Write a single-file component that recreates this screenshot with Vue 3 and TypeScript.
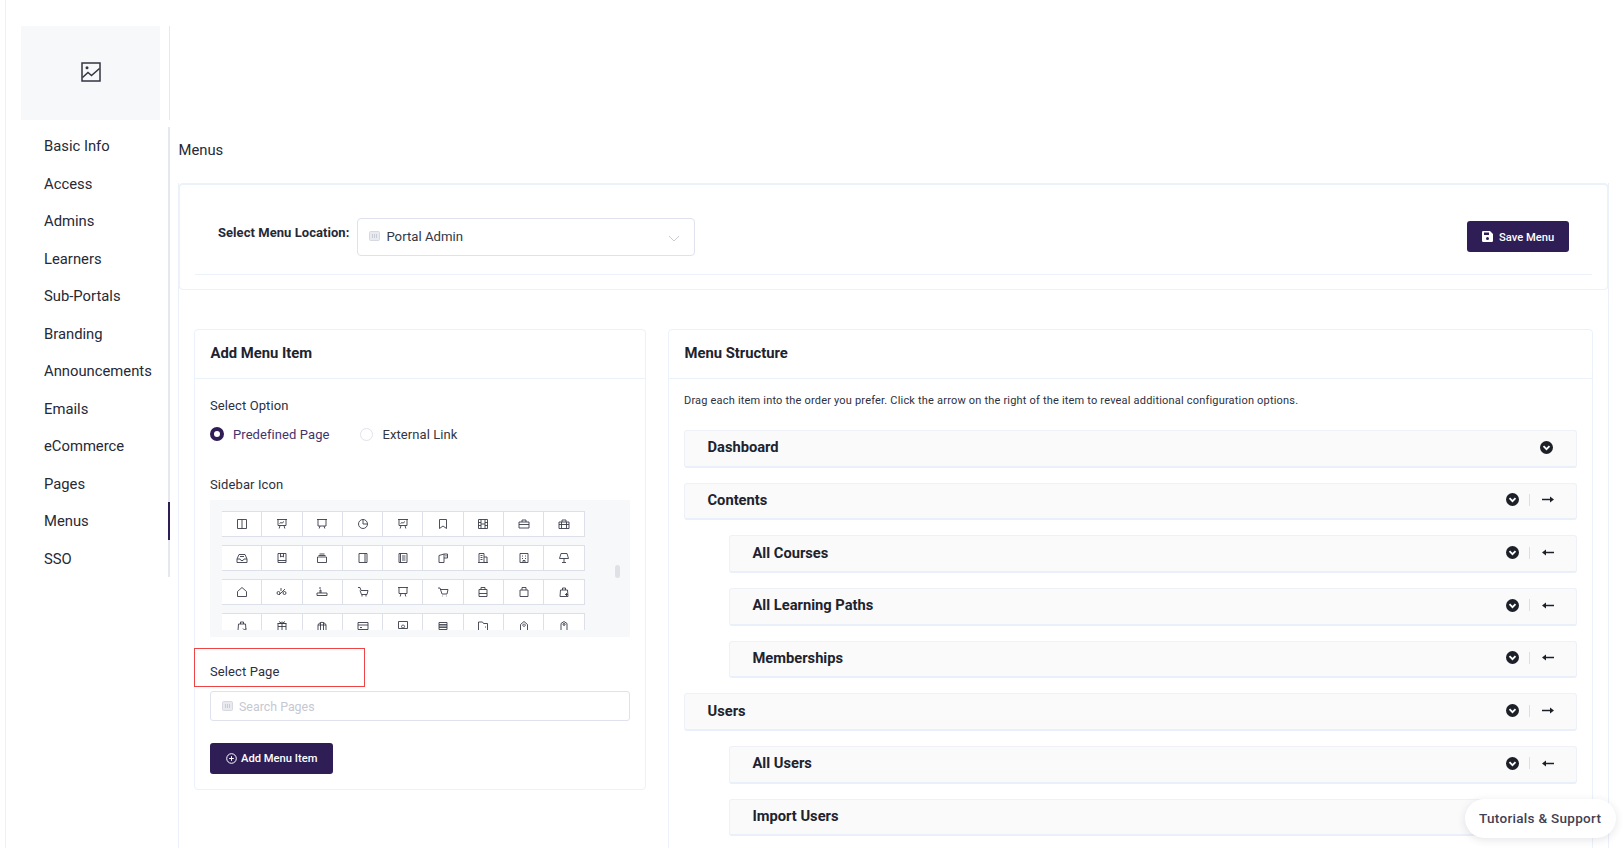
<script setup lang="ts">
interface Row { label: string; child: boolean; arrow: 'none' | 'right' | 'left' }

const navItems: string[] = ['Basic Info', 'Access', 'Admins', 'Learners', 'Sub-Portals', 'Branding', 'Announcements', 'Emails', 'eCommerce', 'Pages', 'Menus', 'SSO']

const rows: Row[] = [
  { label: 'Dashboard', child: false, arrow: 'none' },
  { label: 'Contents', child: false, arrow: 'right' },
  { label: 'All Courses', child: true, arrow: 'left' },
  { label: 'All Learning Paths', child: true, arrow: 'left' },
  { label: 'Memberships', child: true, arrow: 'left' },
  { label: 'Users', child: false, arrow: 'right' },
  { label: 'All Users', child: true, arrow: 'left' },
  { label: 'Import Users', child: true, arrow: 'left' },
]

const icons: string[] = [
  'M1.500 1.500h9v9h-9zM6 1.500v9',
  'M1 1.500h10M2 1.500v6h8v-6M3.500 5.500l1.500-1 1 .7 2-1.700M4 7.500l-.8 3M8 7.500l.8 3',
  'M1 1.500h10M2 1.500v6.500h8V1.500M4 8l-.8 2.500M8 8l.8 2.500',
  'M6 1.500a4.500 4.500 0 1 0 4.500 4.500A4.500 4.500 0 0 0 6 1.500zM6 1.500V6h4.500',
  'M1 1.500h10M2 1.500v6h8v-6M3.500 5.500l1.500-1 1 .7 2-1.700M4 7.500l-.8 3M8 7.500l.8 3',
  'M2.500 1.500h7v9L6 8l-3.500 2.500z',
  'M1.500 1.500h9v9h-9zM4 1.500v9M8 1.500v9M1.500 4.500H4M1.500 7.500H4M8 4.500h2.500M8 7.500h2.500M4 6h4',
  'M1 4h10v6H1zM4 4V2h4v2M1 6.500h10',
  'M1 4h10v6.500H1zM4 4V2h4v2M3.500 4v6.500M8.500 4v6.500M1 6.500h10',
  'M1 7l2-4.500h6L11 7v3.500H1zM1 7h3l1 1.500h2L8 7h3M4 4.500h4',
  'M2 1.500h8v9H2zM2 8.500h8M4.500 1.500v3.500l1.500-1 1.500 1V1.500',
  'M1.500 5h9v5.500h-9zM2.500 3.500h7M3.500 2h5',
  'M2 1.500h8v9H2zM8 1.500v9',
  'M2 1.500h8v9H2zM3.500 1.500v9M5 4h3.500M5 6h3.500M5 8h3.500',
  'M2 3.500 7 2v8.500H2zM7 2h3.500v4H7M9 3v1.500',
  'M2 10.500v-9h5v9M7 5h3v5.500H7M1 10.500h10M3.500 3.500h2M3.500 5.500h2M3.500 7.500h2',
  'M2 1.500h8v9H2zM4 4h1M7 4h1M4 6.500h1M7 6.500h1M5 10.500V8.500h2v2',
  'M3 1.500h6l1.500 5h-9zM6 6.500v4M4 10.500h4',
  'M1.500 5.500 6 1.500l4.500 4v5h-9z',
  'M1 7a1.500 1.500 0 1 0 3 0 1.500 1.500 0 1 0-3 0M7 7a1.500 1.500 0 1 0 3 0 1.500 1.500 0 1 0-3 0M3 9l6-6M5 2v3',
  'M1 7h10v2.500H1zM4 7V4h1v3M3 2h2',
  'M1 1.500h2l1 3h7l-1 4H4.500L3 4.500M5 8.500v2M9 8.500v2',
  'M1 1.500h10M2 1.500v6h8v-6M4 7.500l-.8 3M8 7.500l.8 3',
  'M1 2h2l2 6h5l1-4.500H3.500M5 10h.5M9 10h.5',
  'M2 3.500h8v7H2zM4 3.500V1.500h4v2M2 7.500h8',
  'M2 4h8v6.500H2zM4 4V1.500h4V4',
  'M2 10.500 2.500 4h7l.5 6.500zM4.500 4V2h3v2M7 8.500h3M8.500 7v3',
  'M2 10.500 2.500 4h7l.5 6.500zM4.500 4V2h3v2M7 8.500l1.500 1.500 1.500-1.500',
  'M2 3.500h8v7H2zM1.500 3.500h9M6 1.500v9M3 1.500 6 3.500l3-2M2 6.500h8',
  'M2 4.500Q6 0 10 4.500v6H2zM4.500 2.500v8M7.500 2.500v8M2 5h8',
  'M1 2.500h10v7H1zM1 5h10M3 7.500h2',
  'M1.500 1.500h9v7h-9zM1 10.500h10M6 5a1.500 1.500 0 1 0 .1 0',
  'M2 2.500h8v2.300H2zM2 4.800h8v2.400H2zM2 7.200h8v2.300H2z',
  'M1.500 2h4l1 1.500h4v7h-9zM8 7h1',
  'M2.500 10.500v-6L6 1.500l3.500 3v6zM6 4a1.200 1.200 0 1 0 .1 0',
  'M3 10.500V3.500L6 1.500l3 2v7zM6 3.500a1 1 0 1 0 .1 0M3 10.500h6',
]
</script>

<template>
  <div class="page">
    <header class="top">
      <div class="logo">
        <svg width="20" height="20" viewBox="0 0 20 20" fill="none" stroke="#33353f" stroke-width="1.500">
          <rect x="1" y="1" width="18" height="18" />
          <circle cx="6" cy="5.800" r="1.500" fill="#33353f" stroke="none" />
          <path d="M1.500 15.500 7 10.500l3.500 3L18.500 6.500" />
        </svg>
      </div>
      <div class="top-rule"></div>
    </header>

    <div class="body">
      <nav class="nav">
        <a v-for="item in navItems" :key="item" class="nav-item" :class="{ active: item === 'Menus' }">{{ item }}</a>
      </nav>

      <main class="main">
        <h1 class="title">Menus</h1>
        <div class="sheet">
          <section class="location">
            <div class="location-row">
              <label class="location-label">Select Menu Location:</label>
              <div class="select">
                <svg class="glyph" width="11" height="10" viewBox="0 0 11 10">
                  <rect x=".5" y=".5" width="10" height="9" rx="1" fill="#e9eaef" stroke="#d6d8e2" />
                  <path d="M3.500 3v4M5.500 3v4M7.500 3v4" stroke="#c9ccd6" fill="none" />
                </svg>
                <span class="select-value">Portal Admin</span>
                <svg class="caret" width="12" height="7" viewBox="0 0 12 7" fill="none" stroke="#c9ccd6" stroke-width="1">
                  <path d="M1 1l5 5 5-5" />
                </svg>
              </div>
              <button class="btn save">
                <svg width="11" height="11" viewBox="0 0 11 11">
                  <path fill="#fff" fill-rule="evenodd" d="M1.200 0H8l3 3v6.800A1.200 1.200 0 0 1 9.800 11H1.200A1.200 1.200 0 0 1 0 9.800V1.200A1.200 1.200 0 0 1 1.200 0zM2 1.500V4h5V1.500zM5.500 6a1.500 1.500 0 1 0 0 3 1.500 1.500 0 0 0 0-3z" />
                </svg>
                <span class="save-text">Save Menu</span>
              </button>
            </div>
            <div class="location-rule"></div>
          </section>

          <div class="columns">
            <section class="card add-card">
              <h2 class="card-title">Add Menu Item</h2>
              <div class="add-body">
                <div class="field-label first">Select Option</div>
                <div class="radios">
                  <span class="radio on"></span><span class="radio-label picked">Predefined Page</span>
                  <span class="radio off"></span><span class="radio-label ext">External Link</span>
                </div>
                <div class="field-label icon-label">Sidebar Icon</div>
                <div class="icon-panel">
                  <div class="icon-scroll">
                    <div class="icon-grid">
                      <div v-for="(d, i) in icons" :key="i" class="icon-cell">
                        <svg width="12" height="12" viewBox="0 0 12 12" fill="none" stroke="#3a3d4a" stroke-width="0.900">
                          <path :d="d" />
                        </svg>
                      </div>
                    </div>
                  </div>
                  <span class="thumb"></span>
                </div>
                <div class="field-label page-label">Select Page</div>
                <div class="search">
                  <svg class="glyph" width="11" height="10" viewBox="0 0 11 10">
                    <rect x=".5" y=".5" width="10" height="9" rx="1" fill="#e9eaef" stroke="#d6d8e2" />
                    <path d="M3.500 3v4M5.500 3v4M7.500 3v4" stroke="#c9ccd6" fill="none" />
                  </svg>
                  <span class="search-text">Search Pages</span>
                </div>
                <button class="btn add">
                  <svg width="11" height="11" viewBox="0 0 11 11" fill="none" stroke="#fff" stroke-width="1">
                    <circle cx="5.500" cy="5.500" r="4.800" />
                    <path d="M5.500 3.200v4.600M3.200 5.500h4.600" />
                  </svg>
                  Add Menu Item
                </button>
              </div>
              <div class="highlight"></div>
            </section>

            <section class="card structure-card">
              <h2 class="card-title">Menu Structure</h2>
              <div class="structure-body">
                <p class="hint">Drag each item into the order you prefer. Click the arrow on the right of the item to reveal additional configuration options.</p>
                <div class="rows">
                  <div v-for="row in rows" :key="row.label" class="row" :class="{ child: row.child }">
                    <span class="row-label">{{ row.label }}</span>
                    <svg class="chev" width="13" height="13" viewBox="0 0 13 13">
                      <circle cx="6.500" cy="6.500" r="6.500" fill="#1d2029" />
                      <path d="M3.500 5.200 6.500 8.200l3-3" fill="none" stroke="#fff" stroke-width="1.800" />
                    </svg>
                    <template v-if="row.arrow !== 'none'">
                      <span class="row-rule"></span>
                      <svg class="arrow" width="12" height="9" viewBox="0 0 12 9" fill="none" stroke="#1d2029" stroke-width="1.500">
                        <path v-if="row.arrow === 'right'" d="M0 4.500h10" />
                        <path v-if="row.arrow === 'right'" d="M8 1.500 12 4.500 8 7.500z" fill="#1d2029" stroke="none" />
                        <path v-if="row.arrow === 'left'" d="M2 4.500h10" />
                        <path v-if="row.arrow === 'left'" d="M4 1.500 0 4.500 4 7.500z" fill="#1d2029" stroke="none" />
                      </svg>
                    </template>
                  </div>
                </div>
              </div>
            </section>
          </div>
        </div>
      </main>
    </div>

    <div class="support">Tutorials &amp; Support</div>
  </div>
</template>

<style>
html, body { margin: 0; background: #fff; overflow: hidden; }
</style>

<style scoped>
.page {
  position: relative;
  box-sizing: border-box;
  width: 1618px;
  height: 848px;
  margin-left: 5px;
  border-left: 1px solid #eaf1f9;
  overflow: hidden;
  font-family: Roboto, "Liberation Sans", sans-serif;
  color: #20232e;
}
.top { display: flex; padding: 26px 0 0 15px; }
.logo { width: 139px; height: 94px; background: #f7f8fa; display: flex; align-items: center; justify-content: center; }
.logo svg { margin-top: -3px; }
.top-rule { width: 1px; height: 94px; margin-left: 9px; background: #e4e8ef; }
.body { display: flex; align-items: flex-start; margin-top: 7px; }
.nav { width: 164px; box-sizing: border-box; border-right: 2px solid #e4e8ef; display: flex; flex-direction: column; flex: none; }
.nav-item { position: relative; height: 37.500px; line-height: 38px; padding-left: 38px; font-size: 14.800px; color: #262936; }
.nav-item.active::after { content: ""; position: absolute; right: -2px; top: 0; bottom: 0; width: 2px; background: #2f1e55; }
.main { width: 1431px; margin-left: 8px; flex: none; }
.title { margin: 0; padding: 14px 0 0 .5px; height: 42px; line-height: 18px; font-size: 14.800px; font-weight: 400; color: #262936; }
.sheet { box-sizing: border-box; height: 700px; border-left: 1px solid #eaf1f9; border-right: 1px solid #eaf1f9; }
.location { box-sizing: border-box; height: 107px; margin: 0 -1px; padding: 33px 15px 0; border: 2px solid #ebf2fa; border-bottom-width: 1px; border-radius: 5px; }
.location-row { display: flex; align-items: flex-start; height: 56px; }
.location-label { margin: 7px 8px 0 23px; font-size: 13px; line-height: 16px; font-weight: 700; letter-spacing: 0.050px; color: #262936; }
.select { box-sizing: border-box; width: 338px; height: 38px; display: flex; align-items: center; padding: 0 14px 2px 11px; border: 1px solid #dfe2ec; border-radius: 4px; }
.glyph { margin-right: 6px; flex: none; }
.select-value { font-size: 13.200px; color: #333644; }
.caret { margin-left: auto; margin-top: 4px; }
.btn { display: flex; align-items: center; font-family: inherit; font-weight: 500; color: #fff; background: #2f1e55; border: 0; border-radius: 3px; }
.save { width: 102px; height: 31px; margin: 3px 23px 0 auto; padding: 0 0 0 15px; gap: 6px; font-size: 11.200px; }
.save-text { position: relative; top: .5px; }
.location-rule { height: 1px; background: #ebf2fa; }
.columns { display: flex; gap: 22px; padding: 39px 14px 0 15px; align-items: flex-start; }
.card { box-sizing: border-box; border: 1px solid #ebf2fa; border-radius: 4px; position: relative; }
.add-card { width: 452px; height: 461px; flex: none; }
.structure-card { width: 925px; height: 560px; flex: none; }
.card-title { box-sizing: border-box; height: 49px; margin: 0; padding-left: 15.500px; line-height: 47px; font-size: 14.800px; font-weight: 700; border-bottom: 1px solid #ebf2fa; color: #20232e; }
.add-body { padding: 19px 15px 0; }
.field-label { font-size: 13px; line-height: 16px; color: #2d3040; letter-spacing: 0.100px; }
.radios { display: flex; align-items: center; height: 16px; margin-top: 12px; font-size: 13.500px; }
.radio { box-sizing: border-box; width: 14px; height: 14px; border-radius: 50%; flex: none; }
.radio.on { background: #fff; border: 4.500px solid #2f1e55; }
.radio.off { width: 13px; height: 13px; margin-left: 30px; border: 1px solid #e0e2ea; }
.radio-label { margin-left: 9px; font-size: 13px; letter-spacing: 0.080px; color: #333644; }
.radio-label.picked { color: #43336e; }
.radio-label.ext { margin-left: 10px; }
.icon-label { margin-top: 35px; }
.icon-panel { position: relative; height: 137px; margin-top: 7px; background: #f7f8fa; }
.icon-scroll { height: 130px; overflow: hidden; padding: 11px 0 0 12px; box-sizing: border-box; }
.icon-grid { display: grid; grid-template-columns: repeat(9, 40.300px); grid-auto-rows: 25.500px; row-gap: 8.500px; width: 363px; }
.icon-cell { box-sizing: border-box; display: flex; align-items: center; justify-content: center; background: #fff; border-top: 1px solid #dde0e8; border-bottom: 1px solid #dde0e8; border-right: 1px solid #dde0e8; }
.thumb { position: absolute; left: 405px; top: 65px; width: 5px; height: 13px; border-radius: 3px; background: #dfe1e7; }
.page-label { margin-top: 27px; }
.search { box-sizing: border-box; height: 30px; margin-top: 11px; display: flex; align-items: center; padding-left: 11px; border: 1px solid #dfe2ec; border-radius: 3px; }
.search-text { font-size: 12.400px; color: #c6c8d2; }
.add { width: 123px; height: 31px; margin-top: 22px; padding: 0 0 0 16px; gap: 4px; font-size: 11.200px; }
.highlight { position: absolute; left: -1px; top: 318px; box-sizing: border-box; width: 171px; height: 39px; border: 1.500px solid #ef4444; pointer-events: none; }
.structure-body { padding: 14px 15px 0; }
.hint { margin: 0; font-size: 11px; line-height: 16px; color: #2d3040; letter-spacing: 0.190px; }
.rows { display: flex; flex-direction: column; gap: 15px; margin-top: 21px; }
.row { box-sizing: border-box; height: 37.670px; flex: none; display: flex; align-items: center; padding: 0 23px 2px 22.500px; background: #fafafb; border: 1px solid #eef2f8; border-bottom: 2px solid #e9f0f9; border-radius: 3px; }
.row.child { margin-left: 45px; }
.row-label { margin-right: auto; font-size: 14.700px; font-weight: 700; color: #20232e; }
.row-rule { width: 1px; height: 12px; margin: 0 12px 0 10px; background: #dcdfe6; }
.arrow { margin-right: -1px; }
.support { position: absolute; left: 1459px; top: 799px; box-sizing: border-box; width: 151px; height: 39px; line-height: 38px; padding-left: 14px; font-size: 13.500px; font-weight: 500; letter-spacing: 0.300px; color: #3f4155; background: #fff; border-radius: 20px; box-shadow: 0 2px 8px rgba(40, 44, 70, 0.120); white-space: nowrap; }
</style>
